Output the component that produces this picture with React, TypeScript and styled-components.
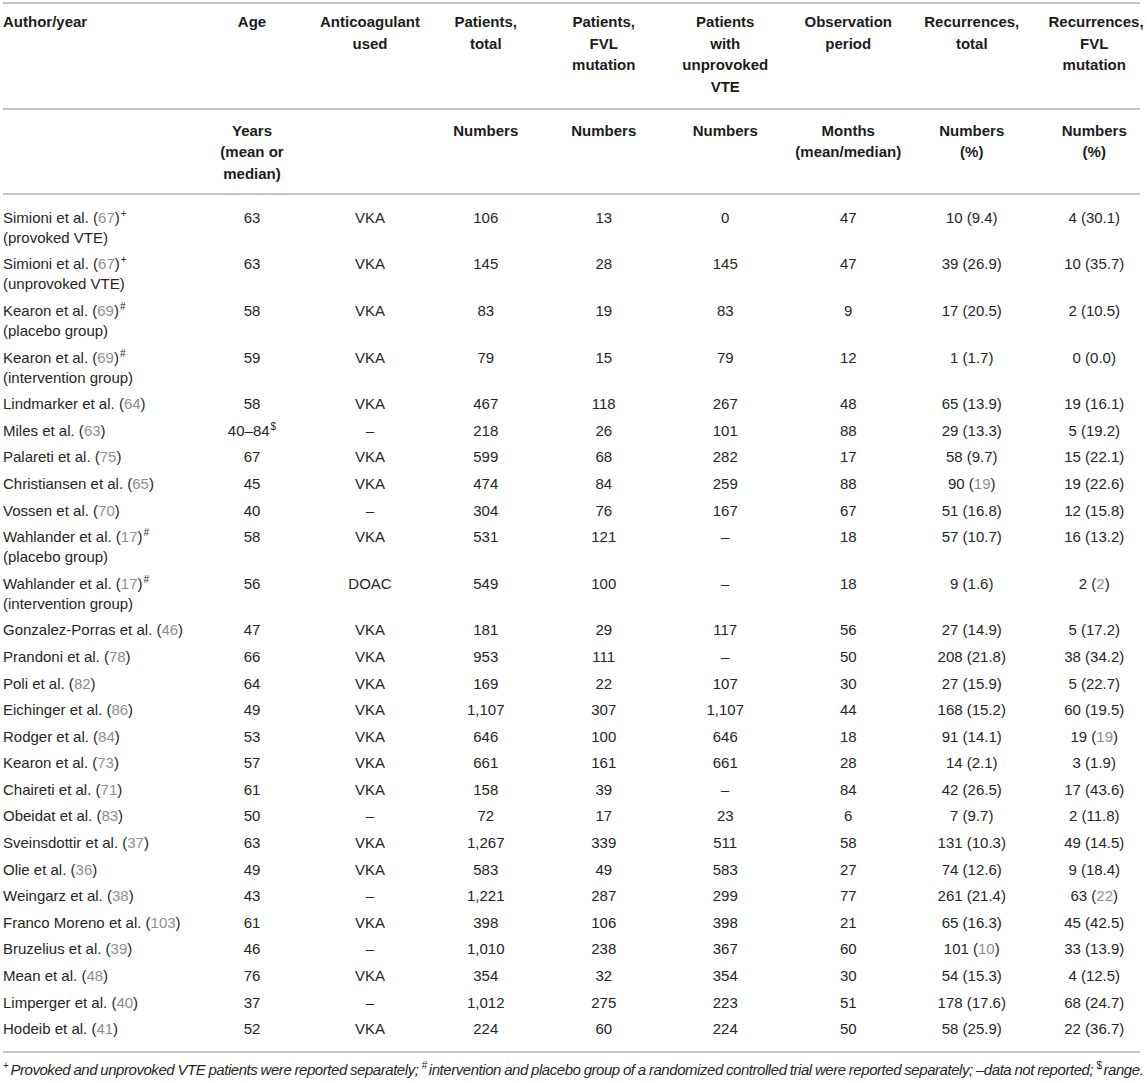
import React from "react";
import styled, { createGlobalStyle } from "styled-components";

const GlobalStyle = createGlobalStyle`
  html, body { margin: 0; padding: 0; background: #ffffff; }
  body {
    font-family: "Liberation Sans", Arial, Helvetica, sans-serif;
    color: #262626;
  }
`;

const GRID = "189px 120px 116px 115.5px 120.5px 122.5px 123.5px 123.5px 106.5px";
const RULE = "#c4c4c4";

const Page = styled.div`
  padding: 2px 0 0 3px;
  width: 1137px;
`;

const Table = styled.div`
  width: 1137px;
  border-top: 2px solid ${RULE};
`;

const HeadRow = styled.div<{ $pt: number; $pb: number }>`
  display: grid;
  grid-template-columns: ${GRID};
  padding: ${(p) => p.$pt}px 0 ${(p) => p.$pb}px;
  border-bottom: 2px solid ${RULE};
  font-size: 15px;
  font-weight: bold;
  line-height: 21.5px;
  color: #1c1c1c;
  & > :last-child { padding-left: 15px; }
`;

const HeadCell = styled.div<{ $left?: boolean }>`
  text-align: ${(p) => (p.$left ? "left" : "center")};
  white-space: nowrap;
`;

const Body = styled.div`
  padding: 10px 0 8px;
  border-bottom: 2px solid ${RULE};
`;

const Row = styled.div`
  display: grid;
  grid-template-columns: ${GRID};
  padding: 3.3px 0;
  font-size: 15px;
  line-height: 20px;
  & > :last-child { padding-left: 15px; }
`;

const Cell = styled.div<{ $left?: boolean }>`
  text-align: ${(p) => (p.$left ? "left" : "center")};
  white-space: nowrap;
`;

const Ref = styled.span`
  color: #8e8e8e;
`;

const Sup = styled.sup`
  font-size: 10px;
  line-height: 0;
  vertical-align: 6px;
  margin-left: 1px;
`;

const NoteMark = styled.sup`
  font-size: 10px;
  line-height: 0;
  vertical-align: 6px;
  font-style: normal;
  margin-right: 2px;
`;

const Footnote = styled.p`
  margin: 7px 0 0;
  font-size: 15px;
  font-style: italic;
  line-height: 20px;
  letter-spacing: -0.45px;
  word-spacing: -0.5px;
  white-space: nowrap;
  color: #262626;
`;

type Val = string | { n: string; g: string };

type RowData = {
  name: string;
  ref: string;
  mark?: string;
  sub?: string;
  vals: Val[];
};

const rows: RowData[] = [
  { name: "Simioni et al.", ref: "67", mark: "+", sub: "(provoked VTE)", vals: ["63", "VKA", "106", "13", "0", "47", "10 (9.4)", "4 (30.1)"] },
  { name: "Simioni et al.", ref: "67", mark: "+", sub: "(unprovoked VTE)", vals: ["63", "VKA", "145", "28", "145", "47", "39 (26.9)", "10 (35.7)"] },
  { name: "Kearon et al.", ref: "69", mark: "#", sub: "(placebo group)", vals: ["58", "VKA", "83", "19", "83", "9", "17 (20.5)", "2 (10.5)"] },
  { name: "Kearon et al.", ref: "69", mark: "#", sub: "(intervention group)", vals: ["59", "VKA", "79", "15", "79", "12", "1 (1.7)", "0 (0.0)"] },
  { name: "Lindmarker et al.", ref: "64", vals: ["58", "VKA", "467", "118", "267", "48", "65 (13.9)", "19 (16.1)"] },
  { name: "Miles et al.", ref: "63", vals: ["40–84$", "–", "218", "26", "101", "88", "29 (13.3)", "5 (19.2)"] },
  { name: "Palareti et al.", ref: "75", vals: ["67", "VKA", "599", "68", "282", "17", "58 (9.7)", "15 (22.1)"] },
  { name: "Christiansen et al.", ref: "65", vals: ["45", "VKA", "474", "84", "259", "88", { n: "90", g: "19" }, "19 (22.6)"] },
  { name: "Vossen et al.", ref: "70", vals: ["40", "–", "304", "76", "167", "67", "51 (16.8)", "12 (15.8)"] },
  { name: "Wahlander et al.", ref: "17", mark: "#", sub: "(placebo group)", vals: ["58", "VKA", "531", "121", "–", "18", "57 (10.7)", "16 (13.2)"] },
  { name: "Wahlander et al.", ref: "17", mark: "#", sub: "(intervention group)", vals: ["56", "DOAC", "549", "100", "–", "18", "9 (1.6)", { n: "2", g: "2" }] },
  { name: "Gonzalez-Porras et al.", ref: "46", vals: ["47", "VKA", "181", "29", "117", "56", "27 (14.9)", "5 (17.2)"] },
  { name: "Prandoni et al.", ref: "78", vals: ["66", "VKA", "953", "111", "–", "50", "208 (21.8)", "38 (34.2)"] },
  { name: "Poli et al.", ref: "82", vals: ["64", "VKA", "169", "22", "107", "30", "27 (15.9)", "5 (22.7)"] },
  { name: "Eichinger et al.", ref: "86", vals: ["49", "VKA", "1,107", "307", "1,107", "44", "168 (15.2)", "60 (19.5)"] },
  { name: "Rodger et al.", ref: "84", vals: ["53", "VKA", "646", "100", "646", "18", "91 (14.1)", { n: "19", g: "19" }] },
  { name: "Kearon et al.", ref: "73", vals: ["57", "VKA", "661", "161", "661", "28", "14 (2.1)", "3 (1.9)"] },
  { name: "Chaireti et al.", ref: "71", vals: ["61", "VKA", "158", "39", "–", "84", "42 (26.5)", "17 (43.6)"] },
  { name: "Obeidat et al.", ref: "83", vals: ["50", "–", "72", "17", "23", "6", "7 (9.7)", "2 (11.8)"] },
  { name: "Sveinsdottir et al.", ref: "37", vals: ["63", "VKA", "1,267", "339", "511", "58", "131 (10.3)", "49 (14.5)"] },
  { name: "Olie et al.", ref: "36", vals: ["49", "VKA", "583", "49", "583", "27", "74 (12.6)", "9 (18.4)"] },
  { name: "Weingarz et al.", ref: "38", vals: ["43", "–", "1,221", "287", "299", "77", "261 (21.4)", { n: "63", g: "22" }] },
  { name: "Franco Moreno et al.", ref: "103", vals: ["61", "VKA", "398", "106", "398", "21", "65 (16.3)", "45 (42.5)"] },
  { name: "Bruzelius et al.", ref: "39", vals: ["46", "–", "1,010", "238", "367", "60", { n: "101", g: "10" }, "33 (13.9)"] },
  { name: "Mean et al.", ref: "48", vals: ["76", "VKA", "354", "32", "354", "30", "54 (15.3)", "4 (12.5)"] },
  { name: "Limperger et al.", ref: "40", vals: ["37", "–", "1,012", "275", "223", "51", "178 (17.6)", "68 (24.7)"] },
  { name: "Hodeib et al.", ref: "41", vals: ["52", "VKA", "224", "60", "224", "50", "58 (25.9)", "22 (36.7)"] },
];

const head1: string[][] = [
  ["Author/year"],
  ["Age"],
  ["Anticoagulant", "used"],
  ["Patients,", "total"],
  ["Patients,", "FVL", "mutation"],
  ["Patients", "with", "unprovoked", "VTE"],
  ["Observation", "period"],
  ["Recurrences,", "total"],
  ["Recurrences,", "FVL", "mutation"],
];

const head2: string[][] = [
  [],
  ["Years", "(mean or", "median)"],
  [],
  ["Numbers"],
  ["Numbers"],
  ["Numbers"],
  ["Months", "(mean/median)"],
  ["Numbers", "(%)"],
  ["Numbers", "(%)"],
];

const Lines: React.FC<{ lines: string[] }> = ({ lines }) => (
  <>
    {lines.map((l, i) => (
      <React.Fragment key={i}>
        {i > 0 && <br />}
        {l}
      </React.Fragment>
    ))}
  </>
);

const renderVal = (v: Val) => {
  if (typeof v !== "string") {
    return (
      <>
        {v.n} (<Ref>{v.g}</Ref>)
      </>
    );
  }
  if (v.endsWith("$")) {
    return (
      <>
        {v.slice(0, -1)}
        <Sup>$</Sup>
      </>
    );
  }
  return v;
};

export default function App() {
  return (
    <Page>
      <GlobalStyle />
      <Table>
        <HeadRow $pt={7} $pb={10.5}>
          {head1.map((h, i) => (
            <HeadCell key={i} $left={i === 0}>
              <Lines lines={h} />
            </HeadCell>
          ))}
        </HeadRow>
        <HeadRow $pt={10} $pb={8.5}>
          {head2.map((h, i) => (
            <HeadCell key={i} $left={i === 0}>
              <Lines lines={h} />
            </HeadCell>
          ))}
        </HeadRow>
        <Body>
          {rows.map((r, i) => (
            <Row key={i}>
              <Cell $left>
                {r.name} (<Ref>{r.ref}</Ref>)
                {r.mark && <Sup>{r.mark}</Sup>}
                {r.sub && (
                  <>
                    <br />
                    {r.sub}
                  </>
                )}
              </Cell>
              {r.vals.map((v, j) => (
                <Cell key={j}>{renderVal(v)}</Cell>
              ))}
            </Row>
          ))}
        </Body>
      </Table>
      <Footnote>
        <NoteMark>+</NoteMark>Provoked and unprovoked VTE patients were reported separately;{" "}
        <NoteMark>#</NoteMark>intervention and placebo group of a randomized controlled trial were reported
        separately; –data not reported; <NoteMark>$</NoteMark>range.
      </Footnote>
    </Page>
  );
}
